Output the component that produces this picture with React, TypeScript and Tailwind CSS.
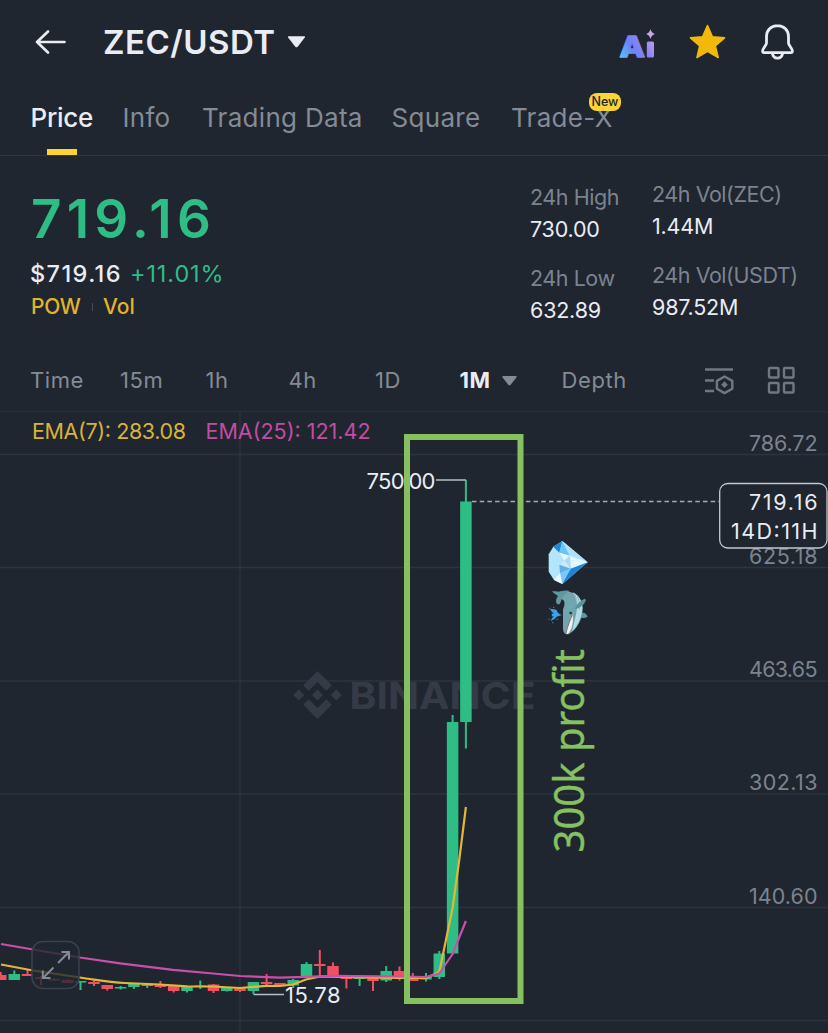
type Candle = [x: number, top: number, bottom: number, high: number, low: number, up: boolean]

const TABS = ['Info', 'Trading Data', 'Square', 'Trade-X']

const INTERVALS = ['Time', '15m', '1h', '4h', '1D']

const STATS = [
  [
    { label: '24h High', value: '730.00' },
    { label: '24h Low', value: '632.89' },
  ],
  [
    { label: '24h Vol(ZEC)', value: '1.44M' },
    { label: '24h Vol(USDT)', value: '987.52M' },
  ],
]

const GRID = [
  { y: 454.5, label: '786.72' },
  { y: 567.5, label: '625.18' },
  { y: 681, label: '463.65' },
  { y: 794, label: '302.13' },
  { y: 907.5, label: '140.60' },
]

// center x, body top, body bottom, wick top, wick bottom, rising
const CANDLES: Candle[] = [
  [0.7, 975, 980, 972, 980, false],
  [14.3, 974, 980, 970.5, 980, true],
  [27.5, 974, 976, 970, 976, false],
  [41, 977, 979, 976, 985, false],
  [54, 979, 980.5, 978, 981, false],
  [67.5, 980, 983, 979, 983, false],
  [80.5, 981, 982.5, 981, 990, true],
  [94, 982, 984, 981, 986, false],
  [107.2, 985, 989, 985, 990.5, false],
  [120.6, 987, 988.5, 986, 989.5, true],
  [133.9, 984, 987, 983, 989, true],
  [147.2, 984.3, 986, 983, 988, true],
  [160.4, 984.5, 987, 981, 988, false],
  [173.7, 986, 991, 986, 992.5, false],
  [187, 987, 991, 987, 992.5, true],
  [200.3, 985.5, 987, 980.5, 989, true],
  [213.5, 984.5, 991, 984, 993, false],
  [226.8, 987, 991, 987, 991.5, true],
  [240, 987, 991, 987, 992, false],
  [253.4, 982, 991, 982, 994, true],
  [266.6, 982, 984, 974, 987, false],
  [280, 983, 985.5, 983, 986, false],
  [293.2, 980, 985.5, 979, 988, true],
  [306.5, 964, 978, 962, 978, true],
  [319.8, 964, 966, 950, 976, false],
  [333, 966, 976.5, 962.5, 976.5, false],
  [346.4, 976.5, 979, 976, 988.5, false],
  [359.6, 977, 979, 977, 986, true],
  [373, 978, 981, 978, 991, false],
  [386.2, 971, 980.5, 966, 982, true],
  [399.5, 971, 979, 966.5, 980.5, false],
  [412.8, 977.5, 981, 973, 981, false],
  [426, 977, 979.5, 973, 981.5, true],
  [439.3, 953.5, 977, 951, 979, true],
  [452.6, 722, 953.5, 715, 953.5, true],
  [465.9, 501.5, 722, 480, 748.5, true],
]

function Header() {
  return (
    <header className="flex h-[84px] items-center pl-[35px] pr-[33px]">
      <svg width="31" height="24" viewBox="0 0 31 24" fill="none" stroke="#eaecef" strokeWidth="2.6" strokeLinecap="round" strokeLinejoin="round">
        <path d="M13 1.500 2 12l11 10.500M2 12h27.500" />
      </svg>
      <h1 className="ml-[37px] w-[173px] whitespace-nowrap pt-px text-[33px] font-semibold tracking-[0.500px] text-[#eaecf4]">
        ZEC/USDT
      </h1>
      <svg className="ml-[11px]" width="19" height="12" viewBox="0 0 18 12" fill="#eaecf4">
        <path d="M1 .2h16q1 .3.300 1.400L10.200 10.800q-1.200 1-2.400 0L.600 1.600Q0 .5 1 .2Z" />
      </svg>
      <div className="ml-auto flex items-center">
        <svg className="overflow-visible" width="38" height="34" viewBox="619 27 38 34">
          <defs>
            <linearGradient id="ai" gradientUnits="userSpaceOnUse" x1="619" y1="58" x2="655" y2="38">
              <stop offset="0" stopColor="#57c8f5" />
              <stop offset="0.35" stopColor="#6d83f5" />
              <stop offset="0.65" stopColor="#8a85f7" />
              <stop offset="1" stopColor="#cf9fe8" />
            </linearGradient>
          </defs>
          <text
            x="619.800"
            y="58.700"
            fontSize="29"
            fontWeight="800"
            textLength="25"
            lengthAdjust="spacingAndGlyphs"
            fill="url(#ai)"
            stroke="url(#ai)"
            strokeWidth="1.600"
            strokeLinejoin="round"
          >
            A
          </text>
          <rect x="646.800" y="43.500" width="7.200" height="16" rx="1.500" fill="url(#ai)" />
          <path d="M650.500 31q.9 4 4.500 5-3.600 1-4.500 5-.9-4-4.500-5 3.600-1 4.500-5Z" fill="#c9a6e6" />
        </svg>
        <svg className="mb-[2px] ml-[32px]" width="37" height="36" viewBox="689 23 37 36">
          <path
            d="m707.5 25.500 4.900 11.200 12.100 1.200-9.200 8.100 2.900 11.500-10.700-6.200-10.500 6.200 2.700-11.500-9.200-8.100 12.100-1.200Z"
            fill="#f0b90b"
            stroke="#f0b90b"
            strokeWidth="1.600"
            strokeLinejoin="round"
          />
        </svg>
        <svg className="mb-px ml-[34px]" width="35" height="38" viewBox="760 22 35 38" fill="none" stroke="#eaecf4" strokeWidth="2.800" strokeLinejoin="round">
          <path d="M777.500 24.600c-6.500 0-11 4.800-11 11v6.500c0 2.400-3.900 5.200-3.900 8 0 .9.600 1.500 1.500 1.500h26.800c.9 0 1.500-.6 1.500-1.500 0-2.800-3.900-5.600-3.900-8v-6.500c0-6.200-4.500-11-11-11Z" />
          <path d="M772.300 52c.5 3.200 2.600 5.200 5.200 5.200s4.700-2 5.200-5.200" />
        </svg>
      </div>
    </header>
  )
}

function Tabs() {
  return (
    <nav className="grid h-[72px] grid-cols-[93px_79.500px_189.500px_119.500px_auto] whitespace-nowrap border-b border-[#2f3640] pl-[30.500px] text-[26px] leading-[67px] text-[#848b96]">
      <div className="relative font-medium tracking-[-0.300px] text-[#eaecf4]">
        Price
        <span className="absolute bottom-0 left-[16px] h-[6px] w-[30px] bg-[#fcd535]" />
      </div>
      {TABS.map((tab) => (
        <div key={tab} className="relative -ml-px tracking-[0.300px]">
          {tab}
          {tab === 'Trade-X' && (
            <span className="absolute left-[78px] top-[9px] flex h-[18px] w-[32px] items-center justify-center rounded-[8px] bg-[#fcd535] text-[12.500px] font-medium leading-none tracking-normal text-[#202630]">
              New
            </span>
          )}
        </div>
      ))}
    </nav>
  )
}

function Summary() {
  return (
    <section className="flex h-[194px] whitespace-nowrap pl-[31px]">
      <div className="w-[499px]">
        <div className="pt-[31px] text-[53px] font-semibold leading-[64px] tracking-[5.200px] text-[#2ebd85]">719.16</div>
        <div className="mt-[7px] flex gap-[8px] text-[23.500px] leading-[32px]">
          <span className="-ml-px font-medium tracking-[1.400px] text-[#eaecf4]">$719.16</span>
          <span className="tracking-[0.900px] text-[#2ebd85]">+11.01%</span>
        </div>
        <div className="mt-[2px] flex items-center text-[21px] font-medium leading-[30px] text-[#e2b32c]">
          <span className="w-[61px] tracking-[-0.300px]">POW</span>
          <span className="h-[8px] w-px bg-[#474d57]" />
          <span className="ml-[10px]">Vol</span>
        </div>
      </div>
      {STATS.map((column, i) => (
        <div key={i} className={i === 0 ? 'w-[122px] pt-[24.500px]' : 'pt-[22px]'}>
          {column.map(({ label, value }) => (
            <div key={label} className="mb-[17px] text-[21.500px] leading-[32px]">
              <div className="tracking-[-0.450px] text-[#7c838f]">{label}</div>
              <div className="tracking-[-0.200px] text-[#eaecf4]">{value}</div>
            </div>
          ))}
        </div>
      ))}
    </section>
  )
}

function Intervals() {
  return (
    <div className="flex h-[62px] items-center whitespace-nowrap border-b border-[#2b323d] pl-[30px] text-[22px] text-[#848b96]">
      <div className="grid grid-cols-[90px_85.500px_83px_86.500px_84.500px] tracking-[0.600px]">
        {INTERVALS.map((item) => (
          <span key={item}>{item}</span>
        ))}
      </div>
      <span className="w-[42px] font-bold tracking-[0.600px] text-[#eaecf4]">1M</span>
      <svg width="15" height="10" viewBox="0 0 15 10" fill="#848b96">
        <path d="M1 0h13q1.200.5.400 1.500L8.500 9q-1 .9-2 0L.600 1.500Q-.2.500 1 0Z" />
      </svg>
      <span className="ml-[45px] w-[142.500px] tracking-[0.600px]">Depth</span>
      <svg width="30" height="28" viewBox="704 367 30 28" fill="none" stroke="#707782" strokeWidth="2.400" strokeLinejoin="round">
        <path d="M705 369.500h28M705 380.500h9M705 391h9" />
        <path d="m724.500 376.500 7.800 4.400v7.800l-7.800 4.400-7.600-4.400v-7.800Z" />
        <path d="m724.500 381.300 3.300 3.400-3.300 3.400-3.300-3.400Z" fill="#707782" stroke="none" />
      </svg>
      <svg className="ml-[33px]" width="29" height="29" viewBox="0 0 29 29" fill="none" stroke="#707782" strokeWidth="2.400">
        <rect x="2" y="2" width="9.500" height="9.500" rx="1" />
        <rect x="17" y="2" width="9.500" height="9.500" rx="1" />
        <rect x="2" y="17" width="9.500" height="9.500" rx="1" />
        <rect x="17" y="17" width="9.500" height="9.500" rx="1" />
      </svg>
    </div>
  )
}

function Watermark() {
  return (
    <g fill="#343b46">
      <path d="m317.500 671 14.300 14.300-5.500 5.500-8.800-8.800-8.800 8.800-5.500-5.500Z" />
      <path d="m317.500 719 14.300-14.300-5.500-5.500-8.800 8.800-8.800-8.800-5.500 5.500Z" />
      <path d="m298.700 689.500 5.500 5.500-5.500 5.500-5.500-5.500ZM336.300 689.500l5.500 5.500-5.500 5.500-5.500-5.500ZM317.500 689.500l5.500 5.500-5.500 5.500-5.500-5.500Z" />
      <text x="349.500" y="708.500" fontSize="37.500" fontWeight="700" textLength="186" lengthAdjust="spacingAndGlyphs">
        BINANCE
      </text>
    </g>
  )
}

function Gem() {
  return (
    <g transform="translate(530 520) scale(0.33333)">
      <path d="M97 63 173 127 97 192 72 180 56 155V103L70 80Z" fill="#b3e5fc" />
      <path d="M97 63 70 80 88 98Z" fill="#1e88d8" />
      <path d="M97 63 88 98 120 107Z" fill="#6bc4f6" />
      <path d="M97 63 173 127 120 107Z" fill="#b0e0fb" />
      <path d="M88 98 120 107 103 122Z" fill="#e6f7ff" />
      <path d="M120 107 173 127 122 146Z" fill="#e3f6ff" />
      <path d="M103 122 120 107 122 146Z" fill="#a5dcf8" />
      <path d="M103 122 122 146 88 134Z" fill="#c5ebfc" />
      <path d="M88 134 122 146 90 160Z" fill="#62aee9" />
      <path d="M122 146 90 160 97 192Z" fill="#78c9f8" />
      <path d="M122 146 173 127 97 192Z" fill="#1c86d6" />
      <path d="M90 160 97 192 72 180Z" fill="#eefaff" />
    </g>
  )
}

function Whale() {
  return (
    <g transform="translate(530 520) scale(0.33333)">
      <path d="M150 285C160 272 168 280 173 290 165 295 155 296 146 291Z" fill="#5b98a2" />
      <path d="M88 215C118 208 151 224 157 255 163 290 142 330 115 343 103 344 98 335 99 318L99 268C106 252 106 238 91 236Z" fill="#72a5ad" />
      <path d="M128 217C149 226 158 247 157 265 156 290 144 317 127 334 133 300 144 274 140 249 138 235 133 224 128 217Z" fill="#b1dce6" />
      <path d="M134 222q9 18 7 38M142 226q9 18 6 42" fill="none" stroke="#78aab3" strokeWidth="2" />
      <path d="M66 214C79 213 88 217 94 214 102 211 111 211 119 213 106 219 96 230 92 246 89 256 83 254 79 249 77 241 79 234 84 228 77 223 70 220 66 214Z" fill="#6297a0" />
      <path d="M165 236C155 239 140 250 134 267 146 268 160 258 168 241Z" fill="#5b939d" />
      <path d="M127 282C132 303 126 331 113 342 108 343 108 338 110 331 116 314 119 298 127 282Z" fill="#f0f4f4" />
      <path d="M127 282C122 300 113 315 108 339" fill="none" stroke="#8b686c" strokeWidth="3" />
      <circle cx="122" cy="279" r="4" fill="#173e38" />
      <path d="M96 285Q82 281 80 270 72 266 60 267 64 276 72 280 62 282 66 286 63 290 72 289 63 295 62 303 74 300 80 290Z" fill="#3ca0ed" />
      <path d="M57 263h4v4h-4ZM69 260h4v4h-4ZM55 296h4v4h-4ZM79 296h4v4h-4ZM66 306h4v4h-4Z" fill="#49768b" />
    </g>
  )
}

function Chart() {
  return (
    <svg className="block" width="828" height="621" viewBox="0 412 828 621">
      <g stroke="#2d343f" strokeWidth="1.300">
        {GRID.map(({ y }) => (
          <path key={y} d={`M0 ${y}H828`} />
        ))}
        <path d="M0 1020.500H828M240 412V1033" />
      </g>

      <Watermark />

      <g fontSize="21.500" fill="#7c838f">
        {GRID.map(({ y, label }) => (
          <text key={label} x="749" y={y - 4} textLength="68.500">
            {label}
          </text>
        ))}
      </g>
      <text x="32" y="438.500" fontSize="21.500" textLength="154" fill="#d9b23a">
        EMA(7): 283.08
      </text>
      <text x="205.500" y="438.500" fontSize="21.500" textLength="165" fill="#c14da2">
        EMA(25): 121.42
      </text>

      {CANDLES.map(([x, top, bottom, high, low, up]) => (
        <g key={x} fill={up ? '#2ebd85' : '#f0505f'}>
          <rect x={x - 1} y={high} width="2" height={low - high} />
          <rect x={x - 5.75} y={top} width="11.500" height={bottom - top} />
        </g>
      ))}

      <g fill="none" strokeWidth="2.200" strokeLinejoin="round">
        <path
          d="M1 964.500 33 970.500 80 977.500C98 980 108 982.500 125 983L160 984.500 187 986.300 213 986.500 240 988 266 985.800 280 986 293 984.500 306 979.500 320 976.500 360 977.500 400 978 426 978 439.300 972 452.600 908 459.500 858 465.900 807"
          stroke="#e5b635"
        />
        <path
          d="M1 944 33 949.500 80 957.500 120 963.300 173 969.800 213 973.500 240 976 280 977.700 306 976.800 333 975.800 400 976.500 426 977 439.300 973.500 452.600 954 459 938 465.900 921"
          stroke="#ca4fab"
        />
      </g>

      <rect x="32" y="941.500" width="47" height="47" rx="11" fill="#1f262f" fillOpacity="0.780" stroke="#3b424d" strokeWidth="1.500" />
      <g fill="none" stroke="#848b96" strokeWidth="2">
        <path d="M58 963 68.500 952.500M61.500 952H69V959.500" />
        <path d="M53.500 967.500 43 978M50.500 978H42.800V970.500" />
      </g>

      <g fontSize="22" fill="#eaecf4">
        <text x="366.500" y="488.500" textLength="69">
          750.00
        </text>
        <text x="285" y="1003" textLength="55.500">
          15.78
        </text>
      </g>
      <path d="M436 480H466M253.500 994.500H284" fill="none" stroke="#b7bdc6" strokeWidth="1.300" />
      <path d="M472 501.500H719" stroke="#a5abb5" strokeWidth="1.400" strokeDasharray="4.500 3.200" />

      <rect x="719.700" y="483.500" width="107.300" height="64.500" rx="8" fill="#1f262f" stroke="#c4c8cf" strokeWidth="1.300" />
      <g fontSize="21.500" fill="#eaecf4">
        <text x="749" y="510" textLength="68.500">
          719.16
        </text>
        <text x="731" y="538.500" textLength="86.500">
          14D:11H
        </text>
      </g>

      <rect x="407" y="437" width="113.500" height="564" fill="none" stroke="#86c060" strokeWidth="6" />
      <Gem />
      <Whale />
      <text
        transform="translate(584 852.500) rotate(-90)"
        className="font-['Noto_Sans',sans-serif]"
        fontSize="42"
        textLength="203.500"
        lengthAdjust="spacingAndGlyphs"
        fill="#86c060"
        stroke="#86c060"
        strokeWidth="0.400"
      >
        300k profit
      </text>
    </svg>
  )
}

export default function App() {
  return (
    <main className="h-[1033px] w-[828px] overflow-hidden bg-[#1f262f] font-['Inter',sans-serif]">
      <Header />
      <Tabs />
      <Summary />
      <Intervals />
      <Chart />
    </main>
  )
}
